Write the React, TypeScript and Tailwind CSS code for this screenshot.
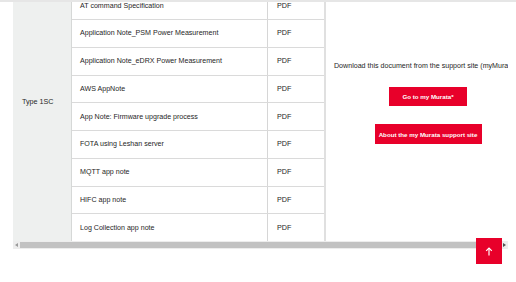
import React from "react";

const docs = [
  "AT command Specification",
  "Application Note_PSM Power Measurement",
  "Application Note_eDRX Power Measurement",
  "AWS AppNote",
  "App Note: Firmware upgrade process",
  "FOTA using Leshan server",
  "MQTT app note",
  "HIFC app note",
  "Log Collection app note",
];

export default function App() {
  return (
    <div
      className="relative w-[516px] h-[282px] bg-white overflow-hidden text-[#262626]"
      style={{ fontFamily: "'Liberation Sans', Arial, sans-serif" }}
    >
      <div className="h-[2px] w-full bg-[#e6e6e6]" />
      <div className="ml-[13px] w-[495px] h-[239px] overflow-hidden">
        <div className="flex mt-[-9.75px]">
          {/* Type column */}
          <div className="w-[59px] shrink-0 bg-[#eef0ef] border-r border-[#d6d8d7] pl-[9px] pt-[95px]">
            <span className="text-[7.2px] leading-[8px] whitespace-nowrap">Type 1SC</span>
          </div>
          {/* Docs + PDF */}
          <div className="w-[252px] shrink-0 flex flex-col">
            {docs.map((d, i) => (
              <div
                key={d}
                className={`flex h-[27.75px] ${i < docs.length - 1 ? "border-b border-[#dadada]" : ""}`}
              >
                <div className="w-[196px] shrink-0 flex items-center pl-[8px] border-r border-[#d6d6d6]">
                  <span className="text-[7.1px] leading-[8px] whitespace-nowrap">{d}</span>
                </div>
                <div className="w-[56px] shrink-0 flex items-center pl-[9px]">
                  <span className="text-[7.2px] leading-[8px]">PDF</span>
                </div>
              </div>
            ))}
          </div>
          {/* Right cell */}
          <div className="w-[198px] shrink-0 border-l-2 border-[#e0e0e0] pl-[8px] pt-[70px] flex flex-col items-center">
            <div className="self-start text-[7.1px] leading-[8px] whitespace-nowrap">
              Download this document from the support site (myMurata).
            </div>
            <div className="mt-[17px] w-[78px] h-[19px] bg-[#e8002a] text-white text-[6.2px] font-bold flex items-center justify-center whitespace-nowrap">
              Go to my Murata*
            </div>
            <div className="mt-[18px] w-[107px] h-[20px] bg-[#e8002a] text-white text-[6.2px] font-bold flex items-center justify-center whitespace-nowrap">
              About the my Murata support site
            </div>
          </div>
        </div>
      </div>
      {/* Scrollbar */}
      <div className="ml-[13px] w-[495px] h-[8px] bg-[#ededed] flex items-center">
        <div className="w-[7px] flex items-center justify-center">
          <svg width="3" height="4" viewBox="0 0 3 4">
            <path d="M3 0 L0 2 L3 4 Z" fill="#9a9a9a" />
          </svg>
        </div>
        <div className="flex-1 h-[6px] bg-[#c2c2c2]" />
        <div className="w-[7px] flex items-center justify-center">
          <svg width="3" height="4" viewBox="0 0 3 4">
            <path d="M0 0 L3 2 L0 4 Z" fill="#505050" />
          </svg>
        </div>
      </div>
      {/* Back to top */}
      <div className="absolute left-[476px] top-[238px] w-[26px] h-[26px] bg-[#e8002a] flex items-center justify-center">
        <svg width="8" height="9" viewBox="0 0 8 9" fill="none" stroke="white" strokeWidth="1.2">
          <path d="M4 8.5 V1" />
          <path d="M1.2 3.8 L4 1 L6.8 3.8" />
        </svg>
      </div>
    </div>
  );
}
